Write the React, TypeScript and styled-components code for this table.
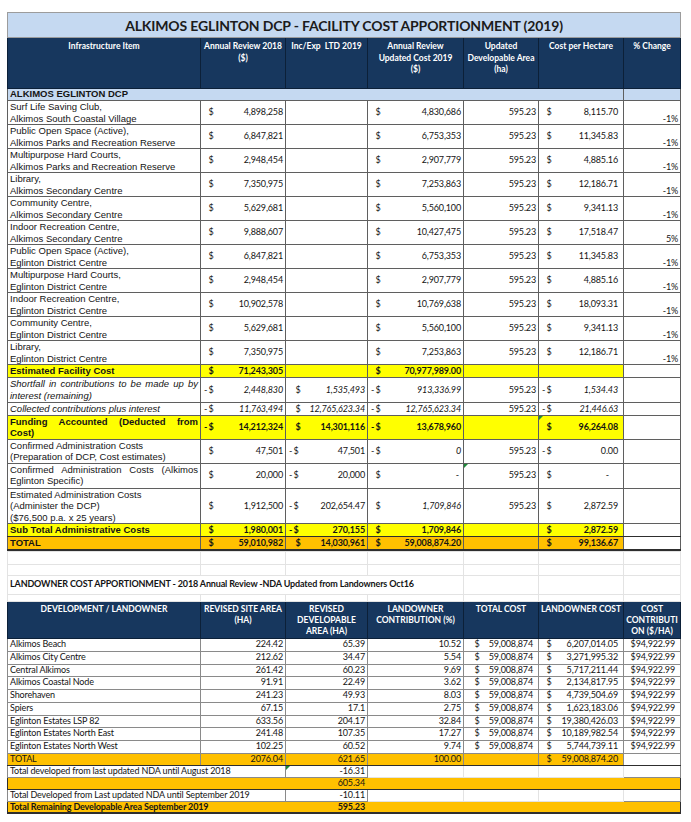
import React from "react";
import styled, { createGlobalStyle, css } from "styled-components";

const NAVY = "#17375e";
const LIGHTBLUE = "#c5d9f1";
const YELLOW = "#ffff00";
const ORANGE = "#ffc000";
const GRID = "#5f5f5f";
const GRID2 = "#8a8a8a";
const SOFT = "#e3e3e3";
const DARK = "#2e2e2e";
const WIDTHS = [193, 85, 82, 96, 75, 85, 57];

const GlobalStyle = createGlobalStyle`
  html, body { margin: 0; padding: 0; background: #fff; }
  body { font-family: "Liberation Sans", Arial, sans-serif; color: #141414; }
`;

const Page = styled.div`
  width: 691px;
  box-sizing: border-box;
  padding: 12px 0 0 7px;
`;

const Sheet = styled.table`
  border-collapse: collapse;
  table-layout: fixed;
  width: 673px;
`;

const Col = styled.col<{ $w: number }>`
  width: ${(p) => p.$w}px;
`;

const Row = styled.tr<{ $h: number }>`
  height: ${(p) => p.$h}px;
`;

const TitleCell = styled.th`
  background: ${LIGHTBLUE};
  border: 1px solid #9c9c9c;
  padding: 0;
  font-family: Lato, sans-serif;
  font-weight: 700;
  font-size: 14px;
  letter-spacing: -0.15px;
  color: #1b1b1b;
  text-align: center;
  vertical-align: middle;
`;

const HeadCell = styled.th<{ $pt?: number; $lh?: number }>`
  background: ${NAVY};
  color: #fff;
  border: 1px solid #0c2038;
  padding: ${(p) => p.$pt ?? 3}px 0 0;
  font-family: Lato, sans-serif;
  font-weight: 700;
  font-size: 8.5px;
  line-height: ${(p) => p.$lh ?? 11.5}px;
  text-align: center;
  vertical-align: top;
  white-space: nowrap;
`;

const SectionCell = styled.td`
  background: ${LIGHTBLUE};
  border: 1px solid ${GRID};
  padding: 0 2px;
  font-family: "Liberation Sans", Arial, sans-serif;
  font-weight: 700;
  font-size: 9.5px;
  line-height: 10.5px;
  vertical-align: middle;
`;

interface CellProps {
  $bg?: string;
  $align?: "left" | "right" | "center";
  $v?: "top" | "middle" | "bottom";
  $bold?: boolean;
  $italic?: boolean;
  $num?: boolean;
  $line?: string;
  $flag?: boolean;
  $pr?: number;
  $bb?: string;
  $openL?: boolean;
  $openR?: boolean;
}

const Cell = styled.td<CellProps>`
  position: ${(p) => (p.$flag ? "relative" : "static")};
  background: ${(p) => p.$bg ?? "#fff"};
  border: 1px solid ${(p) => p.$line ?? GRID};
  ${(p) => p.$bb && css`border-bottom: ${p.$bb};`}
  ${(p) => p.$openL && css`border-left-color: ${p.$bg ?? "#fff"};`}
  ${(p) => p.$openR && css`border-right-color: ${p.$bg ?? "#fff"};`}
  padding: 0 ${(p) => p.$pr ?? 2}px 0 2px;
  text-align: ${(p) => p.$align ?? "left"};
  vertical-align: ${(p) => p.$v ?? "middle"};
  font-weight: ${(p) => (p.$bold ? 700 : 400)};
  font-style: ${(p) => (p.$italic ? "italic" : "normal")};
  overflow: hidden;
  ${(p) =>
    p.$num
      ? css`
          font-family: Lato, sans-serif;
          font-size: 9px;
          letter-spacing: -0.15px;
          line-height: 10.5px;
          white-space: nowrap;
        `
      : css`
          font-family: "Liberation Sans", Arial, sans-serif;
          font-size: 9.5px;
          line-height: 11.5px;
        `}
  ${(p) =>
    p.$flag &&
    css`
      &::before {
        content: "";
        position: absolute;
        left: 0;
        top: 0;
        border-top: 4px solid #1e8a3a;
        border-right: 4px solid transparent;
      }
    `}
`;

const JustLine = styled.span`
  display: block;
  text-align: justify;
  text-align-last: justify;
`;

const Money = styled.div<{ $pl: number; $pr: number }>`
  display: flex;
  justify-content: space-between;
  align-items: center;
  white-space: nowrap;
  padding: 0 ${(p) => p.$pr}px 0 ${(p) => p.$pl}px;
`;

const Cur = styled.span`
  display: inline-flex;
  font-style: normal;
`;

const Sign = styled.span`
  display: inline-block;
  width: 4.5px;
`;

const Amt = ({
  v,
  neg,
  pl = 1,
  pr = 0,
}: {
  v: string;
  neg?: boolean;
  pl?: number;
  pr?: number;
}) => (
  <Money $pl={pl} $pr={pr}>
    <Cur>
      <Sign>{neg ? "-" : ""}</Sign>$
    </Cur>
    <span>{v}</span>
  </Money>
);

const SheetCols = () => (
  <colgroup>
    {WIDTHS.map((w, i) => (
      <Col key={i} $w={w} />
    ))}
  </colgroup>
);

const facilities: [string, string, string, string, string, string][] = [
  ["Surf Life Saving Club,", "Alkimos South Coastal Village", "4,898,258", "4,830,686", "8,115.70", "-1%"],
  ["Public Open Space (Active),", "Alkimos Parks and Recreation Reserve", "6,847,821", "6,753,353", "11,345.83", "-1%"],
  ["Multipurpose Hard Courts,", "Alkimos Parks and Recreation Reserve", "2,948,454", "2,907,779", "4,885.16", "-1%"],
  ["Library,", "Alkimos Secondary Centre", "7,350,975", "7,253,863", "12,186.71", "-1%"],
  ["Community Centre,", "Alkimos Secondary Centre", "5,629,681", "5,560,100", "9,341.13", "-1%"],
  ["Indoor Recreation Centre,", "Alkimos Secondary Centre", "9,888,607", "10,427,475", "17,518.47", "5%"],
  ["Public Open Space (Active),", "Eglinton District Centre", "6,847,821", "6,753,353", "11,345.83", "-1%"],
  ["Multipurpose Hard Courts,", "Eglinton District Centre", "2,948,454", "2,907,779", "4,885.16", "-1%"],
  ["Indoor Recreation Centre,", "Eglinton District Centre", "10,902,578", "10,769,638", "18,093.31", "-1%"],
  ["Community Centre,", "Eglinton District Centre", "5,629,681", "5,560,100", "9,341.13", "-1%"],
  ["Library,", "Eglinton District Centre", "7,350,975", "7,253,863", "12,186.71", "-1%"],
];

const landowners: [string, string, string, string, string, number][] = [
  ["Alkimos Beach", "224.42", "65.39", "10.52", "6,207,014.05", 13],
  ["Alkimos City Centre", "212.62", "34.47", "5.54", "3,271,995.32", 13],
  ["Central Alkimos", "261.42", "60.23", "9.69", "5,717,211.44", 12],
  ["Alkimos Coastal Node", "91.91", "22.49", "3.62", "2,134,817.95", 13],
  ["Shorehaven", "241.23", "49.93", "8.03", "4,739,504.69", 13],
  ["Spiers", "67.15", "17.1", "2.75", "1,623,183.06", 13],
  ["Eglinton Estates LSP 82", "633.56", "204.17", "32.84", "19,380,426.03", 12],
  ["Eglinton Estates North East", "241.48", "107.35", "17.27", "10,189,982.54", 13],
  ["Eglinton Estates North West", "102.25", "60.52", "9.74", "5,744,739.11", 13],
];

const FacilityTable = () => (
  <Sheet>
    <SheetCols />
    <tbody>
      <Row $h={25}>
        <TitleCell colSpan={7}>ALKIMOS EGLINTON DCP - FACILITY COST APPORTIONMENT (2019)</TitleCell>
      </Row>
      <Row $h={51}>
        <HeadCell>Infrastructure Item</HeadCell>
        <HeadCell>
          Annual Review 2018
          <br />($)
        </HeadCell>
        <HeadCell>Inc/Exp&nbsp; LTD 2019</HeadCell>
        <HeadCell>
          Annual Review
          <br />
          Updated Cost 2019
          <br />($)
        </HeadCell>
        <HeadCell>
          Updated
          <br />
          Developable Area
          <br />
          (ha)
        </HeadCell>
        <HeadCell>Cost per Hectare</HeadCell>
        <HeadCell>% Change</HeadCell>
      </Row>
      <Row $h={12}>
        <SectionCell colSpan={6}>ALKIMOS EGLINTON DCP</SectionCell>
        <SectionCell />
      </Row>
      {facilities.map(([a, b, v18, v19, cph, pct], i) => (
        <Row $h={24} key={i}>
          <Cell $v="top">
            {a}
            <br />
            {b}
          </Cell>
          <Cell $num>
            <Amt v={v18} />
          </Cell>
          <Cell $num />
          <Cell $num>
            <Amt v={v19} />
          </Cell>
          <Cell $num $align="right">
            595.23
          </Cell>
          <Cell $num $pr={5}>
            <Amt v={cph} />
          </Cell>
          <Cell $num $align="right" $v="bottom">
            {pct}
          </Cell>
        </Row>
      ))}
      <Row $h={13}>
        <Cell $bg={YELLOW} $bold>
          Estimated Facility Cost
        </Cell>
        <Cell $bg={YELLOW} $num $bold>
          <Amt v="71,243,305" />
        </Cell>
        <Cell $bg={YELLOW} $num />
        <Cell $bg={YELLOW} $num $bold>
          <Amt v="70,977,989.00" />
        </Cell>
        <Cell $bg={YELLOW} $num />
        <Cell $bg={YELLOW} $num />
        <Cell $num />
      </Row>
      <Row $h={25}>
        <Cell $italic $v="top">
          <JustLine>Shortfall in contributions to be made up by</JustLine>
          interest (remaining)
        </Cell>
        <Cell $num $italic>
          <Amt neg v="2,448,830" />
        </Cell>
        <Cell $num $italic>
          <Amt v="1,535,493" pl={3} />
        </Cell>
        <Cell $num $italic>
          <Amt neg v="913,336.99" />
        </Cell>
        <Cell $num $align="right">
          595.23
        </Cell>
        <Cell $num $italic $pr={5}>
          <Amt neg v="1,534.43" />
        </Cell>
        <Cell $num />
      </Row>
      <Row $h={12}>
        <Cell $italic>Collected contributions plus interest</Cell>
        <Cell $num $italic>
          <Amt neg v="11,763,494" />
        </Cell>
        <Cell $num $italic>
          <Amt v="12,765,623.34" pl={3} />
        </Cell>
        <Cell $num $italic>
          <Amt neg v="12,765,623.34" />
        </Cell>
        <Cell $num $align="right">
          595.23
        </Cell>
        <Cell $num $italic $pr={5}>
          <Amt neg v="21,446.63" />
        </Cell>
        <Cell $num />
      </Row>
      <Row $h={24}>
        <Cell $bg={YELLOW} $bold $v="top">
          <JustLine>Funding Accounted (Deducted from</JustLine>
          Cost)
        </Cell>
        <Cell $bg={YELLOW} $num $bold>
          <Amt neg v="14,212,324" />
        </Cell>
        <Cell $bg={YELLOW} $num $bold>
          <Amt v="14,301,116" pl={3} />
        </Cell>
        <Cell $bg={YELLOW} $num $bold>
          <Amt neg v="13,678,960" />
        </Cell>
        <Cell $bg={YELLOW} $num />
        <Cell $bg={YELLOW} $num $bold $pr={5} $flag>
          <Amt v="96,264.08" />
        </Cell>
        <Cell $num />
      </Row>
      <Row $h={24}>
        <Cell $v="top">
          Confirmed Administration Costs
          <br />
          (Preparation of DCP, Cost estimates)
        </Cell>
        <Cell $num>
          <Amt v="47,501" />
        </Cell>
        <Cell $num>
          <Amt neg v="47,501" />
        </Cell>
        <Cell $num>
          <Money $pl={1} $pr={0}>
            <Cur>
              <Sign>-</Sign>$
            </Cur>
            <i>0</i>
          </Money>
        </Cell>
        <Cell $num $align="right">
          595.23
        </Cell>
        <Cell $num $pr={5}>
          <Amt neg v="0.00" />
        </Cell>
        <Cell $num />
      </Row>
      <Row $h={25}>
        <Cell $v="top">
          <JustLine>Confirmed Administration Costs (Alkimos</JustLine>
          Eglinton Specific)
        </Cell>
        <Cell $num>
          <Amt v="20,000" />
        </Cell>
        <Cell $num>
          <Amt neg v="20,000" />
        </Cell>
        <Cell $num>
          <Amt v="-" pr={2} />
        </Cell>
        <Cell $num $align="right" $flag>
          595.23
        </Cell>
        <Cell $num $pr={14}>
          <Amt v="-" />
        </Cell>
        <Cell $num />
      </Row>
      <Row $h={35}>
        <Cell $v="top">
          Estimated Administration Costs
          <br />
          (Administer the DCP)
          <br />
          ($76,500 p.a. x 25 years)
        </Cell>
        <Cell $num>
          <Amt v="1,912,500" />
        </Cell>
        <Cell $num>
          <Amt neg v="202,654.47" />
        </Cell>
        <Cell $num>
          <Money $pl={1} $pr={0}>
            <Cur>
              <Sign />$
            </Cur>
            <i>1,709,846</i>
          </Money>
        </Cell>
        <Cell $num $align="right">
          595.23
        </Cell>
        <Cell $num $pr={5}>
          <Amt v="2,872.59" />
        </Cell>
        <Cell $num />
      </Row>
      <Row $h={13}>
        <Cell $bg={YELLOW} $bold $bb={`1px solid ${DARK}`}>
          Sub Total Administrative Costs
        </Cell>
        <Cell $bg={YELLOW} $num $bold $bb={`1px solid ${DARK}`}>
          <Amt v="1,980,001" />
        </Cell>
        <Cell $bg={YELLOW} $num $bold $bb={`1px solid ${DARK}`}>
          <Amt neg v="270,155" />
        </Cell>
        <Cell $bg={YELLOW} $num $bold $bb={`1px solid ${DARK}`}>
          <Amt v="1,709,846" />
        </Cell>
        <Cell $bg={YELLOW} $num $bb={`1px solid ${DARK}`} />
        <Cell $bg={YELLOW} $num $bold $pr={5} $bb={`1px solid ${DARK}`}>
          <Amt v="2,872.59" />
        </Cell>
        <Cell $num $bb={`1px solid ${DARK}`} />
      </Row>
      <Row $h={13}>
        <Cell $bg={ORANGE} $bold $bb={`2px solid ${DARK}`}>
          TOTAL
        </Cell>
        <Cell $bg={ORANGE} $num $bold $bb={`2px solid ${DARK}`}>
          <Amt v="59,010,982" />
        </Cell>
        <Cell $bg={ORANGE} $num $bold $bb={`2px solid ${DARK}`}>
          <Amt v="14,030,961" pl={3} />
        </Cell>
        <Cell $bg={ORANGE} $num $bold $bb={`2px solid ${DARK}`}>
          <Amt v="59,008,874.20" />
        </Cell>
        <Cell $bg={ORANGE} $num $bb={`2px solid ${DARK}`} />
        <Cell $bg={ORANGE} $num $bold $pr={5} $bb={`2px solid ${DARK}`}>
          <Amt v="99,136.67" />
        </Cell>
        <Cell $num $bb={`2px solid ${DARK}`} />
      </Row>
    </tbody>
  </Sheet>
);

const SpacerRow = ({ h }: { h: number }) => (
  <Row $h={h}>
    {WIDTHS.map((_, i) => (
      <Cell key={i} $line={SOFT} />
    ))}
  </Row>
);

const BandRow = ({ value, label, bold }: { value: string; label?: string; bold?: boolean }) => {
  const bb = bold ? `2px solid ${DARK}` : undefined;
  return (
    <Row $h={12}>
      <Cell colSpan={2} $num $bold={bold} $bg={ORANGE} $line={DARK} $bb={bb} $openR>
        {label}
      </Cell>
      <Cell $num $bold={bold} $align="right" $bg={ORANGE} $line={DARK} $bb={bb} $openL $openR>
        {value}
      </Cell>
      <Cell colSpan={4} $num $bg={ORANGE} $line={DARK} $bb={bb} $openL />
    </Row>
  );
};

const NoteRow = ({ label, value, flag }: { label: string; value: string; flag?: boolean }) => (
  <Row $h={12}>
    <Cell colSpan={2} $num $line={GRID2}>
      {label}
    </Cell>
    <Cell $num $align="right" $line={GRID2} $flag={flag}>
      {value}
    </Cell>
    <Cell $line={SOFT} />
    <Cell $line={SOFT} />
    <Cell $line={SOFT} />
    <Cell $line={GRID2} />
  </Row>
);

const LandownerTable = () => (
  <Sheet>
    <SheetCols />
    <tbody>
      <SpacerRow h={13} />
      <SpacerRow h={11} />
      <Row $h={19}>
        <Cell colSpan={4} $num $bold $line={SOFT}>
          LANDOWNER COST APPORTIONMENT - 2018 Annual Review -NDA Updated from Landowners Oct16
        </Cell>
        <Cell $line={SOFT} />
        <Cell $line={SOFT} />
        <Cell $line={SOFT} />
      </Row>
      <SpacerRow h={7} />
      <Row $h={37}>
        <HeadCell $pt={2} $lh={11}>DEVELOPMENT / LANDOWNER</HeadCell>
        <HeadCell $pt={2} $lh={11}>
          REVISED SITE AREA
          <br />
          (HA)
        </HeadCell>
        <HeadCell $pt={2} $lh={11}>
          REVISED
          <br />
          DEVELOPABLE
          <br />
          AREA (HA)
        </HeadCell>
        <HeadCell $pt={2} $lh={11}>
          LANDOWNER
          <br />
          CONTRIBUTION (%)
        </HeadCell>
        <HeadCell $pt={2} $lh={11}>TOTAL COST</HeadCell>
        <HeadCell $pt={2} $lh={11}>LANDOWNER COST</HeadCell>
        <HeadCell $pt={2} $lh={11}>
          COST
          <br />
          CONTRIBUTI
          <br />
          ON ($/HA)
        </HeadCell>
      </Row>
      {landowners.map(([name, site, dev, pct, cost, h]) => (
        <Row $h={h} key={name}>
          <Cell $num $line={GRID2}>
            {name}
          </Cell>
          <Cell $num $align="right" $line={GRID2}>
            {site}
          </Cell>
          <Cell $num $align="right" $line={GRID2}>
            {dev}
          </Cell>
          <Cell $num $align="right" $line={GRID2}>
            {pct}
          </Cell>
          <Cell $num $pr={5} $line={GRID2}>
            <Amt v="59,008,874" pl={4} />
          </Cell>
          <Cell $num $pr={5} $line={GRID2}>
            <Amt v={cost} />
          </Cell>
          <Cell $num $pr={5} $line={GRID2}>
            <Amt v="94,922.99" pl={0} />
          </Cell>
        </Row>
      ))}
      <Row $h={12}>
        <Cell $num $bg={ORANGE} $line={GRID2} $bb={`1px solid ${DARK}`}>
          TOTAL
        </Cell>
        <Cell $num $bg={ORANGE} $align="right" $line={GRID2} $bb={`1px solid ${DARK}`}>
          2076.04
        </Cell>
        <Cell $num $bg={ORANGE} $align="right" $line={GRID2} $bb={`1px solid ${DARK}`}>
          621.65
        </Cell>
        <Cell $num $bg={ORANGE} $align="right" $line={GRID2} $bb={`1px solid ${DARK}`}>
          100.00
        </Cell>
        <Cell $num $bg={ORANGE} $line={GRID2} $bb={`1px solid ${DARK}`} />
        <Cell $num $bg={ORANGE} $pr={5} $line={GRID2} $bb={`1px solid ${DARK}`}>
          <Amt v="59,008,874.20" />
        </Cell>
        <Cell $num $line={GRID2} $bb={`1px solid ${DARK}`} />
      </Row>
      <NoteRow label="Total developed from last updated NDA until August 2018" value="-16.31" flag />
      <BandRow value="605.34" />
      <NoteRow label="Total Developed from Last updated NDA until September 2019" value="-10.11" />
      <BandRow value="595.23" label="Total Remaining Developable Area September 2019" bold />
    </tbody>
  </Sheet>
);

export default function App() {
  return (
    <>
      <GlobalStyle />
      <Page>
        <FacilityTable />
        <LandownerTable />
      </Page>
    </>
  );
}
